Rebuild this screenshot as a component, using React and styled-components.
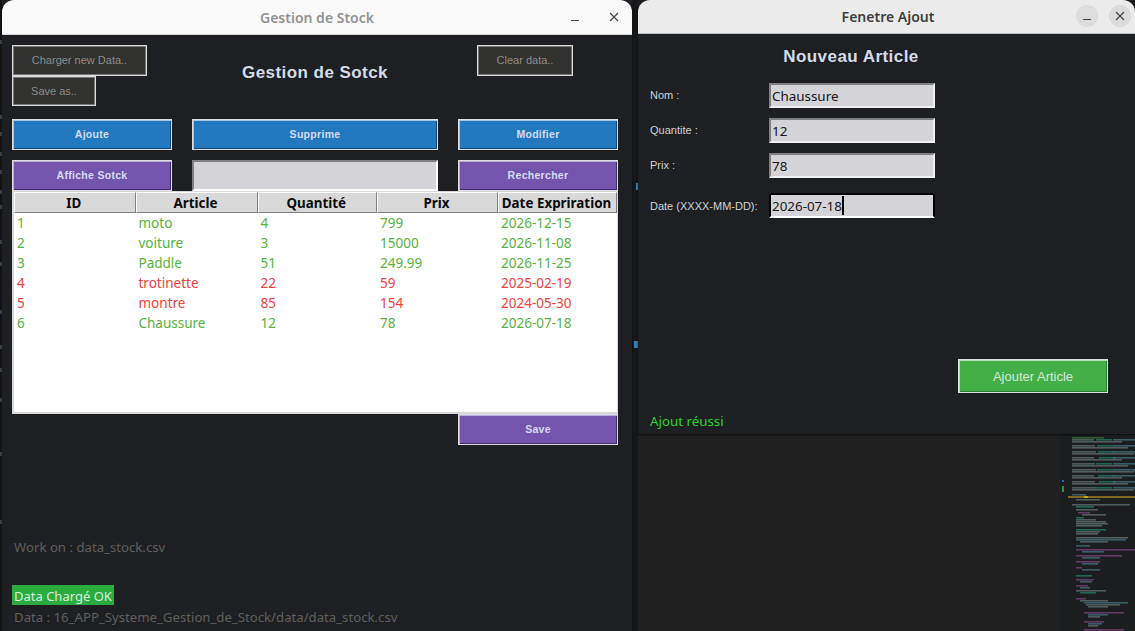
import React from 'react';
import styled, { createGlobalStyle } from 'styled-components';

const rows = [
  { id: 1, article: 'moto', qty: 4, prix: '799', date: '2026-12-15' },
  { id: 2, article: 'voiture', qty: 3, prix: '15000', date: '2026-11-08' },
  { id: 3, article: 'Paddle', qty: 51, prix: '249.99', date: '2026-11-25' },
  { id: 4, article: 'trotinette', qty: 22, prix: '59', date: '2025-02-19', expired: true },
  { id: 5, article: 'montre', qty: 85, prix: '154', date: '2024-05-30', expired: true },
  { id: 6, article: 'Chaussure', qty: 12, prix: '78', date: '2026-07-18' }
];

const fields = [
  { label: 'Nom :', value: 'Chaussure' },
  { label: 'Quantite :', value: '12' },
  { label: 'Prix :', value: '78' },
  { label: 'Date (XXXX-MM-DD):', value: '2026-07-18', focused: true }
];

// minimap of the editor behind the windows: [y, x, width, colour]
const codeBlue = '#4f7f90';
const codeGreen = '#1f8f70';
const codeGrey = '#6f7f80';
const codePurple = '#8a4a8a';
const minimapLines = [
  [437, 1072, 32, '#3f7f3f'],
  ...[439, 445, 451, 457, 463, 469, 475, 481, 487].flatMap((y, i) => [
    [y, 1072, 22 + (i % 3), codeGrey],
    [y, 1096 + (i % 4), 16, codeGreen],
    [y, 1113, 22, codeBlue],
    [y + 2, 1072, 50 + (i % 3) * 6, codeGrey]
  ]),
  [494, 1072, 14, codeBlue],
  [496, 1076, 16, codeGrey],
  [499, 1076, 24, codeGrey],
  [504, 1072, 58, codeGrey],
  [506, 1076, 18, codeGreen],
  [509, 1076, 22, codeGrey],
  [512, 1078, 12, codePurple],
  [514, 1082, 24, codeGrey],
  [517, 1076, 8, codeGreen],
  [519, 1076, 20, codeGrey],
  [521, 1076, 30, codeGrey],
  [523, 1076, 32, codeGrey],
  [525, 1076, 26, codeGrey],
  [529, 1076, 30, codeGreen],
  [531, 1076, 24, codeGrey],
  [533, 1076, 22, codeGrey],
  [537, 1076, 52, codeGrey],
  [539, 1076, 50, codeBlue],
  [541, 1080, 28, codeGrey],
  [545, 1076, 14, codeBlue],
  [549, 1076, 60, codePurple],
  [551, 1082, 22, codeBlue],
  [555, 1076, 46, codePurple],
  [557, 1082, 18, codeBlue],
  [561, 1076, 24, codePurple],
  [563, 1082, 16, codeBlue],
  [567, 1076, 6, codePurple],
  [569, 1082, 18, codeBlue],
  [575, 1076, 16, codeGreen],
  [579, 1076, 18, codePurple],
  [581, 1080, 12, codeBlue],
  [585, 1076, 12, codePurple],
  [587, 1080, 10, codeBlue],
  [590, 1076, 30, codeGrey],
  [592, 1080, 16, codeGreen],
  [598, 1076, 10, codePurple],
  [600, 1080, 28, codeGrey],
  [602, 1084, 44, codeBlue],
  [604, 1086, 34, codeGrey],
  [606, 1088, 20, codeGrey],
  [612, 1084, 40, codePurple],
  [614, 1088, 20, codeBlue],
  [616, 1088, 12, codeGrey],
  [621, 1084, 20, codePurple],
  [623, 1088, 14, codeBlue],
  [625, 1088, 10, codeGrey],
  [629, 1084, 40, codePurple]
];

const edgeBits = [40, 115, 132, 152, 170, 190, 205, 240, 262, 310, 345, 368, 398, 452, 520];

const GlobalStyle = createGlobalStyle`
  html, body {
    margin: 0;
    padding: 0;
    background: #202020;
    overflow: hidden;
  }
`;

const Desktop = styled.div`
  position: relative;
  width: 1135px;
  height: 631px;
  overflow: hidden;
  background: #202020;
`;

const Gutter = styled.div`
  position: absolute;
  top: 0;
  bottom: 0;
  left: ${props => props.left}px;
  width: ${props => props.width}px;
  background: ${props => props.color};
`;

const Minimap = styled.svg`
  position: absolute;
  left: 0;
  top: 0;
`;

const Window = styled.div`
  position: absolute;
  left: ${props => props.left}px;
  top: 0;
  width: ${props => props.width}px;
  height: ${props => props.height}px;
  display: flex;
  flex-direction: column;
  background: #1e1f22;
  border-radius: 12px 12px 0 0;
  overflow: hidden;
  box-shadow: 0 1px 2px rgba(0, 0, 0, 0.6);
`;

const TitleBar = styled.div`
  position: relative;
  flex: none;
  box-sizing: content-box;
  height: ${props => (props.focused ? 33 : 34)}px;
  padding-left: ${props => (props.focused ? 3 : 0)}px;
  display: flex;
  align-items: center;
  justify-content: center;
  background: ${props => (props.focused ? '#ebebeb' : '#fafafa')};
  border-bottom: 1px solid ${props => (props.focused ? '#bdbdbd' : '#d8d8d8')};
  color: ${props => (props.focused ? '#3d3d3d' : '#929292')};
  font: 600 14px 'Noto Sans', sans-serif;
`;

const TitleButtons = styled.div`
  position: absolute;
  right: ${props => props.right}px;
  top: ${props => props.top}px;
  display: flex;
  gap: ${props => props.gap}px;
`;

const TitleButton = styled.div`
  width: 22px;
  height: 22px;
  border-radius: 50%;
  display: flex;
  align-items: center;
  justify-content: center;
  background: ${props => (props.filled ? '#dcdcdc' : 'transparent')};
  color: #444;
`;

const LeftBody = styled.div`
  flex: 1;
  display: flex;
  flex-direction: column;
  padding: 10px 14px 0 10px;
`;

const TopZone = styled.div`
  display: grid;
  grid-template-columns: 135px 330px 96px;
  grid-template-rows: 31px 30px;
  margin-bottom: 13px;
`;

const FileButton = styled.div`
  box-sizing: border-box;
  width: ${props => props.width}px;
  padding-bottom: 1px;
  display: flex;
  align-items: center;
  justify-content: center;
  background: #31312f;
  border: 1px solid #dcdcdc;
  box-shadow: inset 0 0 0 1px #77777a;
  color: #8e8e8a;
  font: 11px 'Liberation Sans', sans-serif;
`;

const Heading = styled.h1`
  grid-column: 2;
  grid-row: 1 / span 2;
  margin: 0;
  padding: 0 0 6px 6px;
  display: flex;
  align-items: center;
  justify-content: center;
  color: #d5dcea;
  font: 700 17px 'Liberation Sans', sans-serif;
  letter-spacing: 0.45px;
`;

const ClearCell = styled.div`
  grid-column: 3;
  grid-row: 1;
  display: flex;
`;

const ToolRow = styled.div`
  display: grid;
  grid-template-columns: 160px 246px 160px;
  column-gap: 20px;
  height: 31px;
  margin-bottom: ${props => props.gap || 0}px;
`;

const colors = {
  blue: { bg: '#2279c0', line: '#114a78', edge: '#a4c6e2' },
  purple: { bg: '#7455ad', line: '#3f2d70', edge: '#bcaedb' },
  green: { bg: '#43b047', line: '#2a7f2e', edge: '#b4e0b6' }
};

const ActionButton = styled.div`
  box-sizing: border-box;
  display: flex;
  align-items: center;
  justify-content: center;
  padding-bottom: ${props => (props.tone === 'green' ? 0 : 2)}px;
  height: ${props => props.height || 31}px;
  width: ${props => (props.width ? `${props.width}px` : 'auto')};
  background: ${props => colors[props.tone].bg};
  border: 1px solid #dcdee2;
  box-shadow: inset 1px 1px 0 ${props => colors[props.tone].edge},
    inset -1px -1px 0 ${props => colors[props.tone].line};
  color: ${props => (props.tone === 'green' ? '#d6e8dc' : '#d5dcf0')};
  font: ${props => (props.tone === 'green' ? '400 13px' : '700 10.5px')} 'Liberation Sans', sans-serif;
  letter-spacing: ${props => (props.tone === 'green' ? 0 : 0.3)}px;
`;

const SearchBox = styled.div`
  box-sizing: border-box;
  background: #d4d4d8;
  border: 2px solid;
  border-color: #808080 #fff #fff #808080;
`;

const TableFrame = styled.div`
  box-sizing: border-box;
  height: 223px;
  background: #fff;
  border: 2px solid #d8d8d8;
  border-top-width: 1px;
  border-right-width: 1px;
`;

const TableRow = styled.div`
  display: grid;
  grid-template-columns: 121.5px 122px 119.5px 121px 119px;
`;

const HeadCell = styled.div`
  box-sizing: border-box;
  height: 21px;
  padding-right: 2px;
  display: flex;
  align-items: center;
  justify-content: center;
  background: #d9d9d9;
  border: 1px solid;
  border-color: #fff #808080 #808080 #fff;
  color: #0a0a0a;
  font: 700 13.4px 'Noto Sans', sans-serif;
`;

const BodyCell = styled.div`
  height: 20px;
  padding-left: 3px;
  color: ${props => (props.expired ? '#f04040' : '#55b340')};
  font: 13.5px/20px 'Noto Sans', sans-serif;
`;

const SaveRow = styled.div`
  display: flex;
  justify-content: flex-end;
`;

const Status = styled.div`
  height: 20px;
  color: #5f5f5c;
  font: 13.2px/20px 'Noto Sans', sans-serif;
  padding-left: 2px;
  margin-top: ${props => props.top}px;
`;

const Loaded = styled.div`
  align-self: flex-start;
  height: 20px;
  padding: 0 2px;
  margin-top: ${props => props.top}px;
  background: #2bac3f;
  color: #d8f0dc;
  font: 13px/22px 'Noto Sans', sans-serif;
`;

const RightBody = styled.div`
  flex: 1;
  display: flex;
  flex-direction: column;
  padding: 0 27px 0 12px;
`;

const RightHeading = styled.h2`
  margin: 12px 0 0;
  height: 21px;
  padding-right: 56px;
  text-align: center;
  color: #d5dcea;
  font: 700 17px/21px 'Liberation Sans', sans-serif;
  letter-spacing: 0.45px;
`;

const Form = styled.div`
  display: grid;
  grid-template-columns: 119px 166px;
  row-gap: 10px;
  margin-top: 16px;
`;

const Label = styled.div`
  margin-top: ${props => (props.low ? 5 : 0)}px;
  padding-bottom: ${props => (props.low ? 0 : 2)}px;
  display: flex;
  align-items: center;
  color: #d0d3d8;
  font: 11px 'Liberation Sans', sans-serif;
`;

const Field = styled.div`
  box-sizing: border-box;
  margin-top: ${props => (props.focused ? 5 : 0)}px;
  height: 25px;
  display: flex;
  align-items: center;
  padding-left: 1px;
  background: #d4d4d8;
  border: 2px solid;
  border-color: ${props => (props.focused ? '#000 #000 #fff #000' : '#808080 #f0f0f0 #f0f0f0 #808080')};
  color: #16161a;
  font: 13.4px 'Noto Sans', sans-serif;
`;

const Caret = styled.span`
  display: inline-block;
  width: 2px;
  height: 19px;
  background: #000;
`;

const SubmitRow = styled.div`
  display: flex;
  justify-content: flex-end;
  margin-top: 141px;
`;

const Success = styled.div`
  margin-top: 18px;
  height: 20px;
  color: #2ad42a;
  font: 13.3px/20px 'Noto Sans', sans-serif;
`;

const Glyph = ({ type }) => (
  <svg width="12" height="12" viewBox="0 0 12 12" fill="none" stroke="currentColor" strokeWidth="1.2">
    {type === 'min' ? <path d="M2 9.5h8" /> : <path d="M2 2l8 8M10 2l-8 8" />}
  </svg>
);

const App = () => (
  <Desktop>
    <GlobalStyle />
    <Gutter left={0} width={2} color="#141414" />
    <Gutter left={632} width={6} color="#16171a" />
    <Gutter left={1060} width={75} color="#1c1d1f" />
    <Minimap width="1135" height="631">
      {edgeBits.map(y => (
        <rect key={y} x="0" y={y} width="2" height="4" fill="#3c4448" />
      ))}
      <rect x="1062" y="480" width="2" height="2" fill="#1f6fd0" />
      <rect x="1062" y="486" width="2" height="6" fill="#18a048" />
      <rect x="636" y="183" width="2" height="7" fill="#3a7fb0" />
      <rect x="634" y="341" width="4" height="7" fill="#3a7fb0" />
      {minimapLines.map(([y, x, width, color], i) => (
        <rect key={i} x={x} y={y} width={width} height="1.6" fill={color} opacity="0.65" />
      ))}
      <rect x="1068" y="496" width="67" height="2" fill="#7d6a1c" />
      <rect x="1084" y="496" width="4" height="2" fill="#c9a820" />
    </Minimap>

    <Window left={2} width={630} height={640}>
      <TitleBar>
        Gestion de Stock
        <TitleButtons right={7} top={6} gap={17}>
          <TitleButton>
            <Glyph type="min" />
          </TitleButton>
          <TitleButton>
            <Glyph type="close" />
          </TitleButton>
        </TitleButtons>
      </TitleBar>
      <LeftBody>
        <TopZone>
          <FileButton width={135}>Charger new Data..</FileButton>
          <Heading>Gestion de Sotck</Heading>
          <ClearCell>
            <FileButton width={96}>Clear data..</FileButton>
          </ClearCell>
          <FileButton width={84}>Save as..</FileButton>
        </TopZone>
        <ToolRow gap={10}>
          <ActionButton tone="blue">Ajoute</ActionButton>
          <ActionButton tone="blue">Supprime</ActionButton>
          <ActionButton tone="blue">Modifier</ActionButton>
        </ToolRow>
        <ToolRow>
          <ActionButton tone="purple">Affiche Sotck</ActionButton>
          <SearchBox />
          <ActionButton tone="purple">Rechercher</ActionButton>
        </ToolRow>
        <TableFrame>
          <TableRow>
            {['ID', 'Article', 'Quantité', 'Prix', 'Date Expriration'].map(title => (
              <HeadCell key={title}>{title}</HeadCell>
            ))}
          </TableRow>
          {rows.map(row => (
            <TableRow key={row.id}>
              {[row.id, row.article, row.qty, row.prix, row.date].map((value, i) => (
                <BodyCell key={i} expired={row.expired}>
                  {value}
                </BodyCell>
              ))}
            </TableRow>
          ))}
        </TableFrame>
        <SaveRow>
          <ActionButton tone="purple" width={160}>
            Save
          </ActionButton>
        </SaveRow>
        <Status top={92}>Work on : data_stock.csv</Status>
        <Loaded top={28}>Data Chargé OK</Loaded>
        <Status top={2}>Data : 16_APP_Systeme_Gestion_de_Stock/data/data_stock.csv</Status>
      </LeftBody>
    </Window>

    <Window left={638} width={497} height={434}>
      <TitleBar focused>
        Fenetre Ajout
        <TitleButtons right={4} top={5} gap={11}>
          <TitleButton filled>
            <Glyph type="min" />
          </TitleButton>
          <TitleButton filled>
            <Glyph type="close" />
          </TitleButton>
        </TitleButtons>
      </TitleBar>
      <RightBody>
        <RightHeading>Nouveau Article</RightHeading>
        <Form>
          {fields.map(field => (
            <React.Fragment key={field.label}>
              <Label low={field.focused}>{field.label}</Label>
              <Field focused={field.focused}>
                {field.value}
                {field.focused && <Caret />}
              </Field>
            </React.Fragment>
          ))}
        </Form>
        <SubmitRow>
          <ActionButton tone="green" width={150} height={34}>
            Ajouter Article
          </ActionButton>
        </SubmitRow>
        <Success>Ajout réussi</Success>
      </RightBody>
    </Window>
  </Desktop>
);

export default App;
